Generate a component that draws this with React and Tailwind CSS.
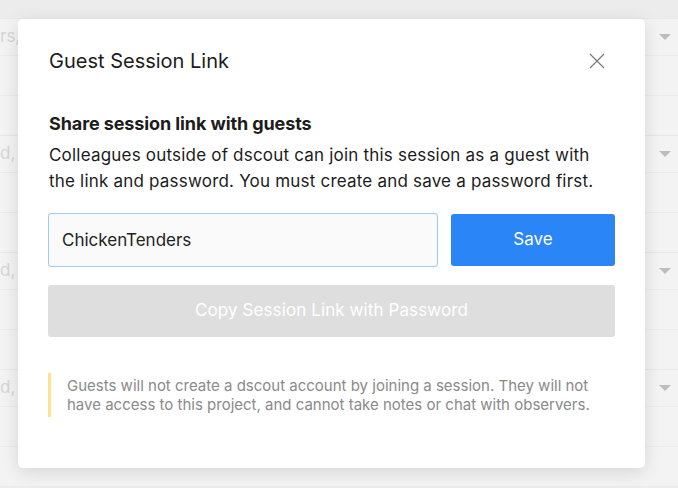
import React from "react";

const groups = ["rs,", "d,", "d, A", "d, A"];

const Caret = () => (
  <svg width="12" height="6" viewBox="0 0 12 6" className="text-[#bdbdbd]">
    <path d="M0 0h12L6 6z" fill="currentColor" />
  </svg>
);

export default function App() {
  return (
    <div
      className="relative w-[678px] h-[488px] overflow-hidden bg-[#ececec]"
      style={{ fontFamily: "Inter, 'Liberation Sans', sans-serif" }}
    >
      {/* page behind the overlay */}
      <div className="mt-[18px] bg-[#f3f3f3]">
        {groups.map((label, i) => (
          <div key={i}>
            <div className="h-[37px] border-t border-[#e8e8e8] flex items-center justify-between pr-[7px]">
              <span className="text-[17px] text-[#d6d6d6] whitespace-nowrap">{label}</span>
              <Caret />
            </div>
            <div className="h-[40px] border-t border-[#ebebeb]" />
            <div className="h-[40px] border-t border-[#ebebeb]" />
          </div>
        ))}
      </div>

      {/* modal */}
      <div className="absolute left-[18px] top-[19px] w-[627px] h-[449px] bg-white rounded-[5px] shadow-[0_4px_18px_rgba(0,0,0,0.12)] px-[30px] pt-[28px]">
        <div className="flex items-center justify-between pl-[1px]">
          <h2 className="text-[20px] text-[#1c1c1c] leading-[28px]">Guest Session Link</h2>
          <button className="w-[24px] h-[24px] mr-[6px] flex items-center justify-center text-[#777]">
            <svg width="16" height="16" viewBox="0 0 16 16" fill="none" stroke="currentColor" strokeWidth="1.2">
              <path d="M1 1l14 14M15 1L1 15" />
            </svg>
          </button>
        </div>

        <div className="mt-[36px] pl-[1px] text-[17px] text-[#1c1c1c]">
          <h3 className="text-[18px] font-bold leading-[26px] tracking-[-0.1px]">Share session link with guests</h3>
          <p className="w-[548px] leading-[26px] mt-[5px] tracking-[0.2px]">
            Colleagues outside of dscout can join this session as a guest with the link and password. You must create and save a password first.
          </p>
        </div>

        <div className="mt-[19px] flex gap-[13px]">
          <input
            className="w-[390px] h-[54px] rounded-[3px] border border-[#9cc8fa] bg-[#fafafa] px-[13px] text-[17px] text-[#222] outline-none"
            defaultValue="ChickenTenders"
          />
          <button className="flex-1 h-[52px] mt-[1px] rounded-[3px] bg-[#2a85f6] text-white text-[17px]">
            Save
          </button>
        </div>

        <button className="mt-[18px] w-full h-[52px] rounded-[3px] bg-[#dedede] text-white text-[17px] tracking-[0.1px]">
          Copy Session Link with Password
        </button>

        <div className="mt-[36px] border-l-[3px] border-[#fde28f] pl-[16px] py-[3px] text-[15px] leading-[19px] text-[#8a8a8a]">
          Guests will not create a dscout account by joining a session. They will not have access to this project, and cannot take notes or chat with observers.
        </div>
      </div>
    </div>
  );
}
